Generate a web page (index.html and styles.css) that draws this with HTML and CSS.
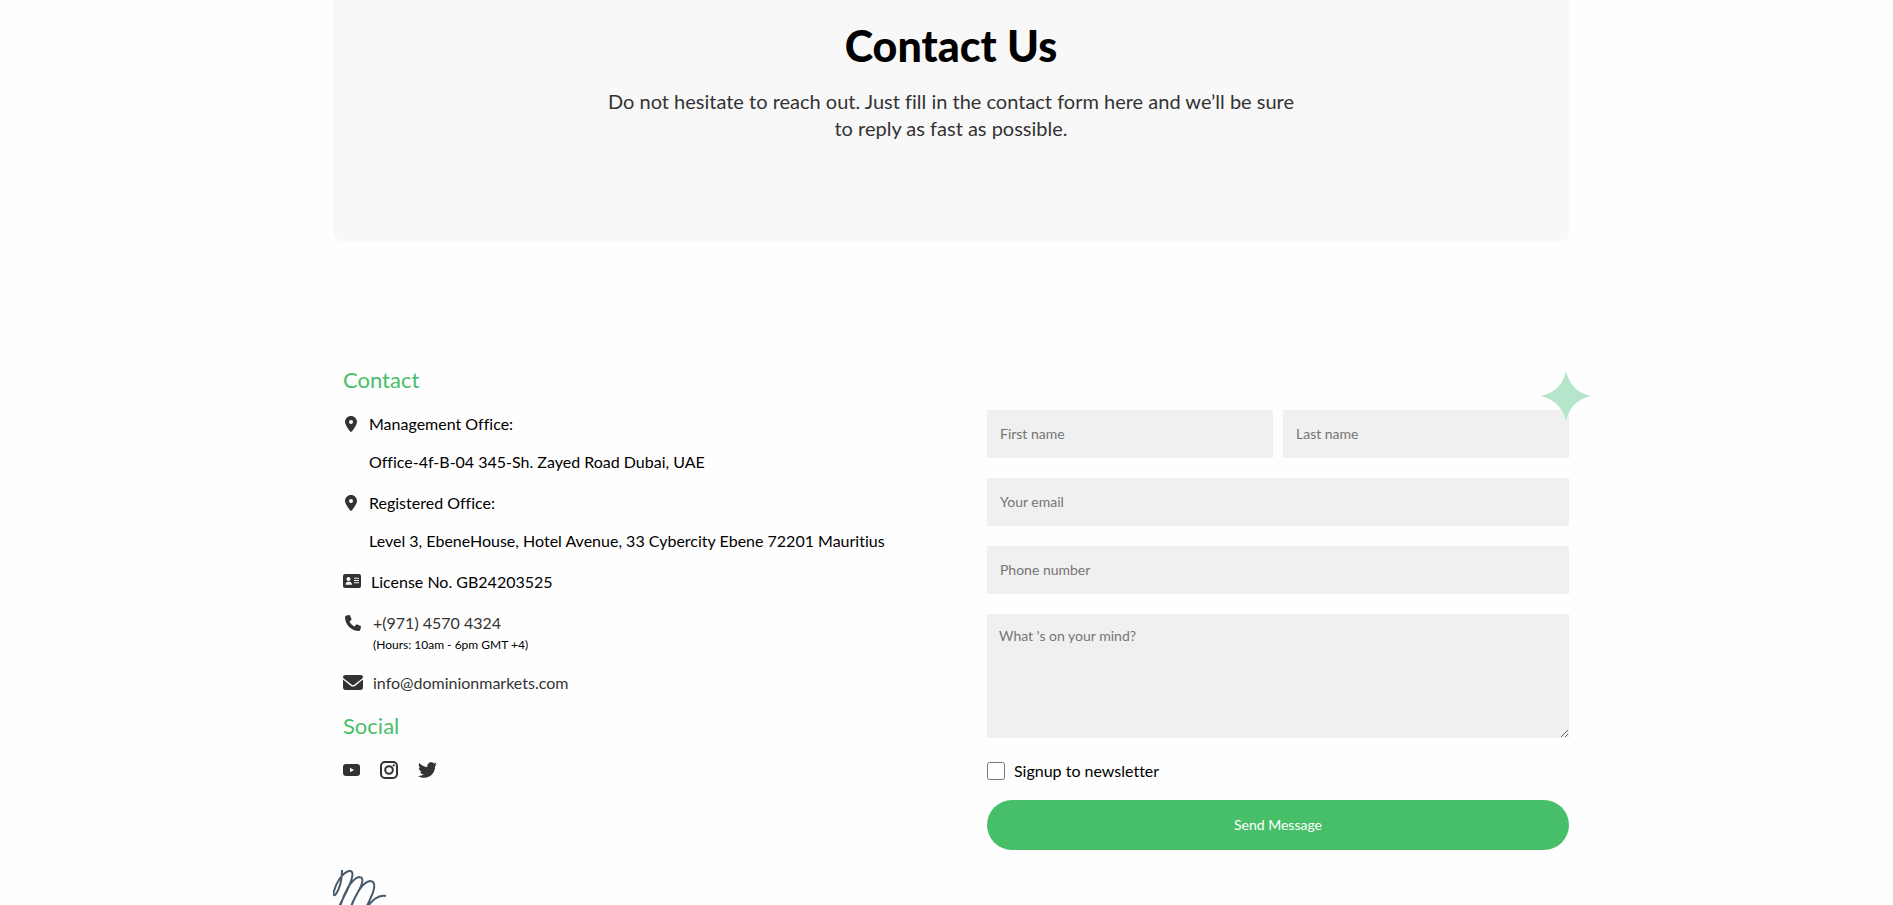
FILE: index.html
```html
<!DOCTYPE html>
<html lang="en">

<head>
  <meta charset="UTF-8" />
  <meta name="viewport" content="width=device-width, initial-scale=1.0" />
  <title>Contact Us</title>
  <link rel="stylesheet" href="styles.css">
</head>

<body>
  <div class="container">
    <header class="hero">
      <h1>Contact Us</h1>
      <p>Do not hesitate to reach out. Just fill in the contact form here and we’ll be sure to reply as fast as possible.</p>
    </header>

    <main class="contact">
      <section class="info">
        <h2 class="title">Contact</h2>
        <ul class="info-list">
          <li>
            <svg class="icon icon-pin" viewBox="0 0 384 512"><path d="M215.700 499.200C267 435 384 279.400 384 192C384 86 298 0 192 0S0 86 0 192c0 87.400 117 243 168.300 307.200c12.300 15.300 35.100 15.300 47.400 0zM192 128a64 64 0 1 1 0 128a64 64 0 1 1 0-128z" /></svg>
            <div class="office">
              <p>Management Office:</p>
              <p>Office-4f-B-04 345-Sh. Zayed Road Dubai, UAE</p>
            </div>
          </li>
          <li>
            <svg class="icon icon-pin" viewBox="0 0 384 512"><path d="M215.700 499.200C267 435 384 279.400 384 192C384 86 298 0 192 0S0 86 0 192c0 87.400 117 243 168.300 307.200c12.300 15.300 35.100 15.300 47.400 0zM192 128a64 64 0 1 1 0 128a64 64 0 1 1 0-128z" /></svg>
            <div class="office">
              <p>Registered Office:</p>
              <p>Level 3, EbeneHouse, Hotel Avenue, 33 Cybercity Ebene 72201 Mauritius</p>
            </div>
          </li>
          <li>
            <svg class="icon icon-card" viewBox="0 0 18 14"><path fill-rule="evenodd" d="M2 0h14a2 2 0 0 1 2 2v10a2 2 0 0 1-2 2H2a2 2 0 0 1-2-2V2a2 2 0 0 1 2-2zM5.500 3a2 2 0 1 0 0 4a2 2 0 0 0 0-4zM2.500 10.800h6.500c0-1.800-1.200-3-2.700-3H5.200c-1.500 0-2.700 1.200-2.700 3zM11 3.700v1h5v-1zM11 6v1h5V6zM11 8.300v1h5v-1z" /></svg>
            <p>License No. GB24203525</p>
          </li>
          <li>
            <svg class="icon icon-phone" viewBox="0 0 512 512"><path d="M164.900 24.600c-7.700-18.600-28-28.500-47.400-23.200l-88 24C12.100 30.200 0 46 0 64C0 311.400 200.600 512 448 512c18 0 33.800-12.100 38.600-29.500l24-88c5.300-19.400-4.600-39.700-23.200-47.400l-96-40c-16.300-6.800-35.200-2.100-46.300 11.600L304.700 368C234.300 334.700 177.300 277.700 144 207.300L193.300 167c13.700-11.200 18.400-30 11.600-46.300l-40-96z" /></svg>
            <div>
              <a href="tel:+97145704324">+(971) 4570 4324</a>
              <p class="hours">(Hours: 10am - 6pm GMT +4)</p>
            </div>
          </li>
          <li>
            <svg class="icon icon-mail" viewBox="0 0 512 384"><path d="M64 0C28.700 0 0 24 0 54c0 14 7 24 19.200 33L227 250c17 13 41 13 58 0L492.800 87C505 78 512 68 512 54C512 24 483.300 0 448 0zM0 118v202c0 35.300 28.700 64 64 64h384c35.300 0 64-28.700 64-64V118L308 279c-31 24-73 24-104 0z" /></svg>
            <a href="mailto:info@dominionmarkets.com">info@dominionmarkets.com</a>
          </li>
        </ul>

        <h2 class="title">Social</h2>
        <nav class="social">
          <a href="#" aria-label="YouTube">
            <svg class="icon-youtube" viewBox="0 0 17 12"><path fill-rule="evenodd" d="M3 0h11a3 3 0 0 1 3 3v6a3 3 0 0 1-3 3H3a3 3 0 0 1-3-3V3a3 3 0 0 1 3-3zM7 3.700v4.600L11 6z" /></svg>
          </a>
          <a href="#" aria-label="Instagram">
            <svg class="icon-instagram" viewBox="0 0 18 18"><rect x="1" y="1" width="16" height="16" rx="4" /><circle cx="9" cy="9" r="3.800" /><circle class="dot" cx="13.700" cy="4.400" r="1.100" /></svg>
          </a>
          <a href="#" aria-label="Twitter">
            <svg class="icon-twitter" viewBox="0 48 512 416"><path d="M459.400 151.700c.3 4.500 .3 9.100 .3 13.600 0 138.700-105.600 298.600-298.600 298.600-59.500 0-114.700-17.200-161.100-47.100 8.400 1 16.600 1.300 25.300 1.300 49.100 0 94.200-16.600 130.300-44.800-46.100-1-84.800-31.200-98.100-72.800 6.500 1 13 1.600 19.800 1.600 9.400 0 18.800-1.300 27.600-3.600-48.100-9.700-84.100-52-84.100-103v-1.300c14 7.800 30.200 12.700 47.400 13.300-28.300-18.800-46.800-51-46.800-87.400 0-19.500 5.200-37.400 14.300-53 51.700 63.700 129.300 105.300 216.400 109.800-1.600-7.800-2.600-15.900-2.600-24 0-57.800 46.800-104.900 104.900-104.900 30.200 0 57.500 12.700 76.700 33.100 23.700-4.500 46.500-13.300 66.600-25.300-7.800 24.400-24.400 44.800-46.100 57.800 21.100-2.300 41.600-8.100 60.400-16.200-14.300 20.800-32.200 39.300-52.600 54.300z" /></svg>
          </a>
        </nav>
      </section>

      <form class="form">
        <svg class="star" viewBox="0 0 50 50"><path d="M25 0Q30 21 50 25Q29 30 25 50Q20 30 0 25Q21 20 25 0z" /></svg>
        <div class="names">
          <input type="text" placeholder="First name" aria-label="First name">
          <input type="text" placeholder="Last name" aria-label="Last name">
        </div>
        <input type="email" placeholder="Your email" aria-label="Your email">
        <input type="tel" placeholder="Phone number" aria-label="Phone number">
        <textarea placeholder="What 's on your mind?" aria-label="What 's on your mind?"></textarea>
        <div class="signup">
          <input type="checkbox" id="newsletter">
          <label for="newsletter">Signup to newsletter</label>
        </div>
        <button type="submit">Send Message</button>
      </form>
    </main>

    <svg class="scribble" viewBox="0 0 54 36"><path d="M9 1C9 10 7 19 3 25C1 28 0 25 1 22C3 14 9 4 16 2C22 1 19 10 16 17C13 24 9 31 6 38M7 38C11 24 18 10 26 8C32 8 29 16 25 23C22 29 19 33 18 38M18 38C23 25 30 13 37 12C43 12 42 20 38 28C37 32 34 35 34 38C39 32 45 25 53 27" /></svg>
  </div>
</body>

</html>
```
FILE: styles.css
```css
* {
  margin: 0;
  padding: 0;
  box-sizing: border-box;
}

body {
  font-family: Lato, "Open Sans", sans-serif;
  font-size: 16px;
  line-height: 24px;
  font-variant-ligatures: none;
  color: #000;
  background: #fefefe;
  overflow-x: hidden;
}

ul {
  list-style: none;
}

a {
  color: #333;
  text-decoration: none;
}

svg {
  display: block;
  fill: #333;
}

.container {
  max-width: 1245px;
  margin: 0 auto;
  padding-left: 9px;
}

.hero {
  padding: 22px 24px 100px;
  background: #f8f8f8;
  border-radius: 0 0 10px 10px;
  text-align: center;
}

.hero h1 {
  font-size: 43px;
  font-weight: 900;
  line-height: 48px;
  margin-bottom: 18px;
}

.hero p {
  max-width: 704px;
  margin: 0 auto;
  font-size: 20px;
  line-height: 27px;
  color: #333;
}

.contact {
  display: grid;
  grid-template-columns: 1fr 582px;
  gap: 60px;
  padding-top: 125px;
}

.info {
  padding-left: 10px;
}

.title {
  font-size: 22px;
  font-weight: 400;
  line-height: 26px;
  color: #47bf69;
}

.info-list {
  display: flex;
  flex-direction: column;
  gap: 17px;
  padding: 19px 0 18px;
}

.info-list li {
  display: flex;
  gap: 10px;
}

.office {
  display: flex;
  flex-direction: column;
  gap: 14px;
}

.icon {
  flex: none;
  margin-top: 4px;
}

.icon-pin {
  width: 16px;
  height: 16px;
}

.icon-card {
  width: 18px;
  height: 14px;
}

.icon-phone {
  width: 20px;
  height: 16px;
}

.icon-mail {
  width: 20px;
  height: 15px;
}

.hours {
  font-size: 12px;
  line-height: 19px;
}

.social {
  display: flex;
  align-items: center;
  gap: 20px;
  padding-top: 22px;
}

.icon-youtube {
  width: 17px;
  height: 12px;
}

.icon-instagram {
  width: 18px;
  height: 18px;
  fill: none;
  stroke: #333;
  stroke-width: 2;
}

.icon-instagram .dot {
  fill: #333;
  stroke: none;
}

.icon-twitter {
  width: 19px;
  height: 16px;
}

.form {
  position: relative;
  display: flex;
  flex-direction: column;
  gap: 20px;
  padding-top: 43px;
}

.names {
  display: grid;
  grid-template-columns: 1fr 1fr;
  gap: 10px;
}

.names input,
.form > input,
.form textarea {
  width: 100%;
  height: 48px;
  padding: 0 13px 2px;
  border: none;
  background: #f0f0f0;
  font: inherit;
  font-size: 14px;
}

.form textarea {
  display: block;
  height: 124px;
  padding: 10px 12px;
}

.form ::placeholder {
  color: #757575;
}

.star {
  position: absolute;
  top: 4px;
  right: -22px;
  width: 50px;
  height: 50px;
  fill: #b5e5ca;
}

.signup {
  display: flex;
  align-items: center;
  gap: 9px;
  height: 22px;
  padding-top: 4px;
}

.signup input {
  width: 18px;
  height: 18px;
}

.form button {
  height: 50px;
  border: none;
  border-radius: 25px;
  background: #47bf69;
  color: #fff;
  font: inherit;
  font-size: 14px;
}

.scribble {
  width: 54px;
  height: 36px;
  margin-top: 19px;
  fill: none;
  stroke: #475a6b;
  stroke-width: 2;
}
```
